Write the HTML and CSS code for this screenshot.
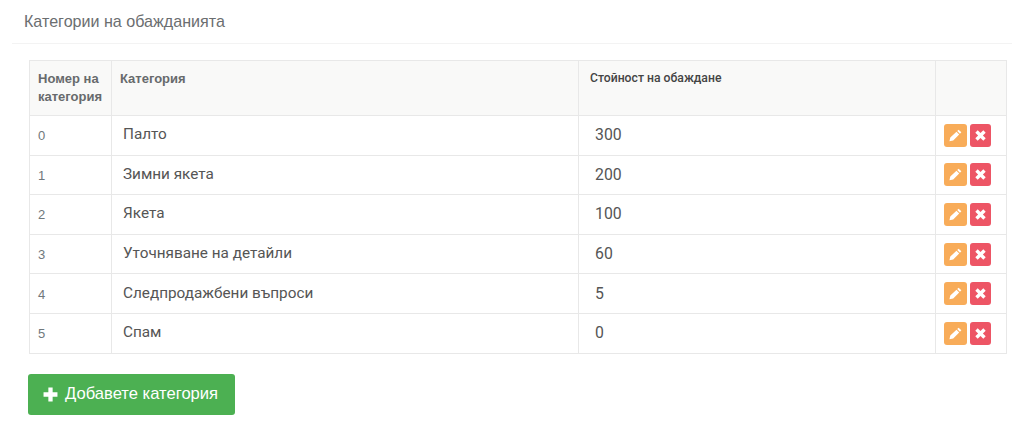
FILE: index.html
```html
<!DOCTYPE html>
<html lang="bg">
<head>
    <meta charset="UTF-8">
    <meta name="viewport" content="width=device-width, initial-scale=1.0">
    <title>Категории на обажданията</title>
    <link rel="stylesheet" href="styles.css">
</head>
<body>
    <div class="panel-heading">Категории на обажданията</div>
    <div class="panel-body">
        <table class="call-table">
            <colgroup>
                <col class="col-num">
                <col class="col-name">
                <col class="col-value">
                <col class="col-actions">
            </colgroup>
            <thead>
                <tr>
                    <th>Номер на категория</th>
                    <th>Категория</th>
                    <th class="th-value">Стойност на обаждане</th>
                    <th></th>
                </tr>
            </thead>
            <tbody>
                <tr>
                    <td class="num">0</td>
                    <td class="name">Палто</td>
                    <td class="value">300</td>
                    <td class="actions">
                        <span class="btn-mini btn-edit"><svg viewBox="0 0 12 12"><path d="M8.9.6l2.5 2.5-1.3 1.3-2.5-2.5zM6.9 2.6l2.5 2.5-5.5 5.5-3.5.8.8-3.5z"/></svg></span>
                        <span class="btn-mini btn-del"><svg viewBox="0 0 12 12"><path d="M3.4 1.2L6 3.8l2.6-2.6 2.2 2.2L8.2 6l2.6 2.6-2.2 2.2L6 8.2l-2.6 2.6-2.2-2.2L3.8 6 1.2 3.4z"/></svg></span>
                    </td>
                </tr>
                <tr>
                    <td class="num">1</td>
                    <td class="name">Зимни якета</td>
                    <td class="value">200</td>
                    <td class="actions">
                        <span class="btn-mini btn-edit"><svg viewBox="0 0 12 12"><path d="M8.9.6l2.5 2.5-1.3 1.3-2.5-2.5zM6.9 2.6l2.5 2.5-5.5 5.5-3.5.8.8-3.5z"/></svg></span>
                        <span class="btn-mini btn-del"><svg viewBox="0 0 12 12"><path d="M3.4 1.2L6 3.8l2.6-2.6 2.2 2.2L8.2 6l2.6 2.6-2.2 2.2L6 8.2l-2.6 2.6-2.2-2.2L3.8 6 1.2 3.4z"/></svg></span>
                    </td>
                </tr>
                <tr>
                    <td class="num">2</td>
                    <td class="name">Якета</td>
                    <td class="value">100</td>
                    <td class="actions">
                        <span class="btn-mini btn-edit"><svg viewBox="0 0 12 12"><path d="M8.9.6l2.5 2.5-1.3 1.3-2.5-2.5zM6.9 2.6l2.5 2.5-5.5 5.5-3.5.8.8-3.5z"/></svg></span>
                        <span class="btn-mini btn-del"><svg viewBox="0 0 12 12"><path d="M3.4 1.2L6 3.8l2.6-2.6 2.2 2.2L8.2 6l2.6 2.6-2.2 2.2L6 8.2l-2.6 2.6-2.2-2.2L3.8 6 1.2 3.4z"/></svg></span>
                    </td>
                </tr>
                <tr>
                    <td class="num">3</td>
                    <td class="name">Уточняване на детайли</td>
                    <td class="value">60</td>
                    <td class="actions">
                        <span class="btn-mini btn-edit"><svg viewBox="0 0 12 12"><path d="M8.9.6l2.5 2.5-1.3 1.3-2.5-2.5zM6.9 2.6l2.5 2.5-5.5 5.5-3.5.8.8-3.5z"/></svg></span>
                        <span class="btn-mini btn-del"><svg viewBox="0 0 12 12"><path d="M3.4 1.2L6 3.8l2.6-2.6 2.2 2.2L8.2 6l2.6 2.6-2.2 2.2L6 8.2l-2.6 2.6-2.2-2.2L3.8 6 1.2 3.4z"/></svg></span>
                    </td>
                </tr>
                <tr>
                    <td class="num">4</td>
                    <td class="name">Следпродажбени въпроси</td>
                    <td class="value">5</td>
                    <td class="actions">
                        <span class="btn-mini btn-edit"><svg viewBox="0 0 12 12"><path d="M8.9.6l2.5 2.5-1.3 1.3-2.5-2.5zM6.9 2.6l2.5 2.5-5.5 5.5-3.5.8.8-3.5z"/></svg></span>
                        <span class="btn-mini btn-del"><svg viewBox="0 0 12 12"><path d="M3.4 1.2L6 3.8l2.6-2.6 2.2 2.2L8.2 6l2.6 2.6-2.2 2.2L6 8.2l-2.6 2.6-2.2-2.2L3.8 6 1.2 3.4z"/></svg></span>
                    </td>
                </tr>
                <tr>
                    <td class="num">5</td>
                    <td class="name">Спам</td>
                    <td class="value">0</td>
                    <td class="actions">
                        <span class="btn-mini btn-edit"><svg viewBox="0 0 12 12"><path d="M8.9.6l2.5 2.5-1.3 1.3-2.5-2.5zM6.9 2.6l2.5 2.5-5.5 5.5-3.5.8.8-3.5z"/></svg></span>
                        <span class="btn-mini btn-del"><svg viewBox="0 0 12 12"><path d="M3.4 1.2L6 3.8l2.6-2.6 2.2 2.2L8.2 6l2.6 2.6-2.2 2.2L6 8.2l-2.6 2.6-2.2-2.2L3.8 6 1.2 3.4z"/></svg></span>
                    </td>
                </tr>
            </tbody>
        </table>
        <button class="btn-add">
            <svg viewBox="0 0 14 14"><path d="M5 .5h4v4.500h4.500v4H9v4.500H5V9H.5V5H5z"/></svg>
            Добавете категория
        </button>
    </div>
</body>
</html>
```

FILE: styles.css
```css
/* Reset */
* {
    margin: 0;
    padding: 0;
    box-sizing: border-box;
}

body {
    font-family: 'Liberation Sans', Arial, sans-serif;
    background-color: #fff;
    color: #676a6c;
    overflow: hidden;
}

.panel-heading {
    height: 44px;
    margin: 0 12px;
    padding: 12px 12px 0;
    font-size: 16.1px;
    line-height: 18px;
    color: #6b6e70;
    border-bottom: 1px solid #f3f3f3;
}

.panel-body {
    padding: 16px 17px 0 28px;
}

.call-table {
    width: 977px;
    table-layout: fixed;
    border-collapse: collapse;
    margin-left: 1px;
}

.col-num { width: 82px; }
.col-name { width: 467px; }
.col-value { width: 357px; }
.col-actions { width: 71px; }

.call-table th,
.call-table td {
    border: 1px solid #e8e8e8;
}

.call-table th {
    height: 55px;
    padding: 9px 8px 0;
    background-color: #f9f9f8;
    vertical-align: top;
    text-align: left;
    font-size: 13px;
    line-height: 18px;
    font-weight: bold;
}

.call-table th.th-value {
    padding-top: 8px;
    padding-left: 11px;
    font-family: Roboto, sans-serif;
    font-size: 12.2px;
    font-weight: 500;
    color: #444;
}

.call-table td {
    height: 39.6px;
}

.call-table td.num {
    padding: 1px 8px 0;
    font-size: 13px;
    color: #70787c;
}

.call-table td.name,
.call-table td.value {
    font-family: Roboto, sans-serif;
    font-size: 15.3px;
    color: #555;
}

.call-table td.name {
    padding: 0 12px 2px 11px;
}

.call-table td.value {
    padding: 0 15px 1px 16px;
    font-size: 15.8px;
}

.call-table td.actions {
    padding: 0 8px;
    font-size: 0;
}

.btn-mini {
    display: inline-flex;
    align-items: center;
    justify-content: center;
    height: 23px;
    border-radius: 3px;
    vertical-align: middle;
}

.btn-mini svg {
    width: 13px;
    height: 13px;
    fill: #fff;
}

.btn-edit {
    width: 23px;
    margin-right: 3px;
    background-color: #f8ac59;
}

.btn-del {
    width: 21px;
    background-color: #ed5565;
}

.btn-add {
    display: flex;
    align-items: center;
    gap: 7px;
    width: 207px;
    height: 41px;
    margin-top: 20px;
    padding-left: 15px;
    border: none;
    border-radius: 3px;
    background-color: #4cb052;
    color: #fff;
    font-family: 'Liberation Sans', Arial, sans-serif;
    font-size: 16.6px;
    white-space: nowrap;
}

.btn-add svg {
    width: 15px;
    height: 15px;
    fill: #fff;
}
```
